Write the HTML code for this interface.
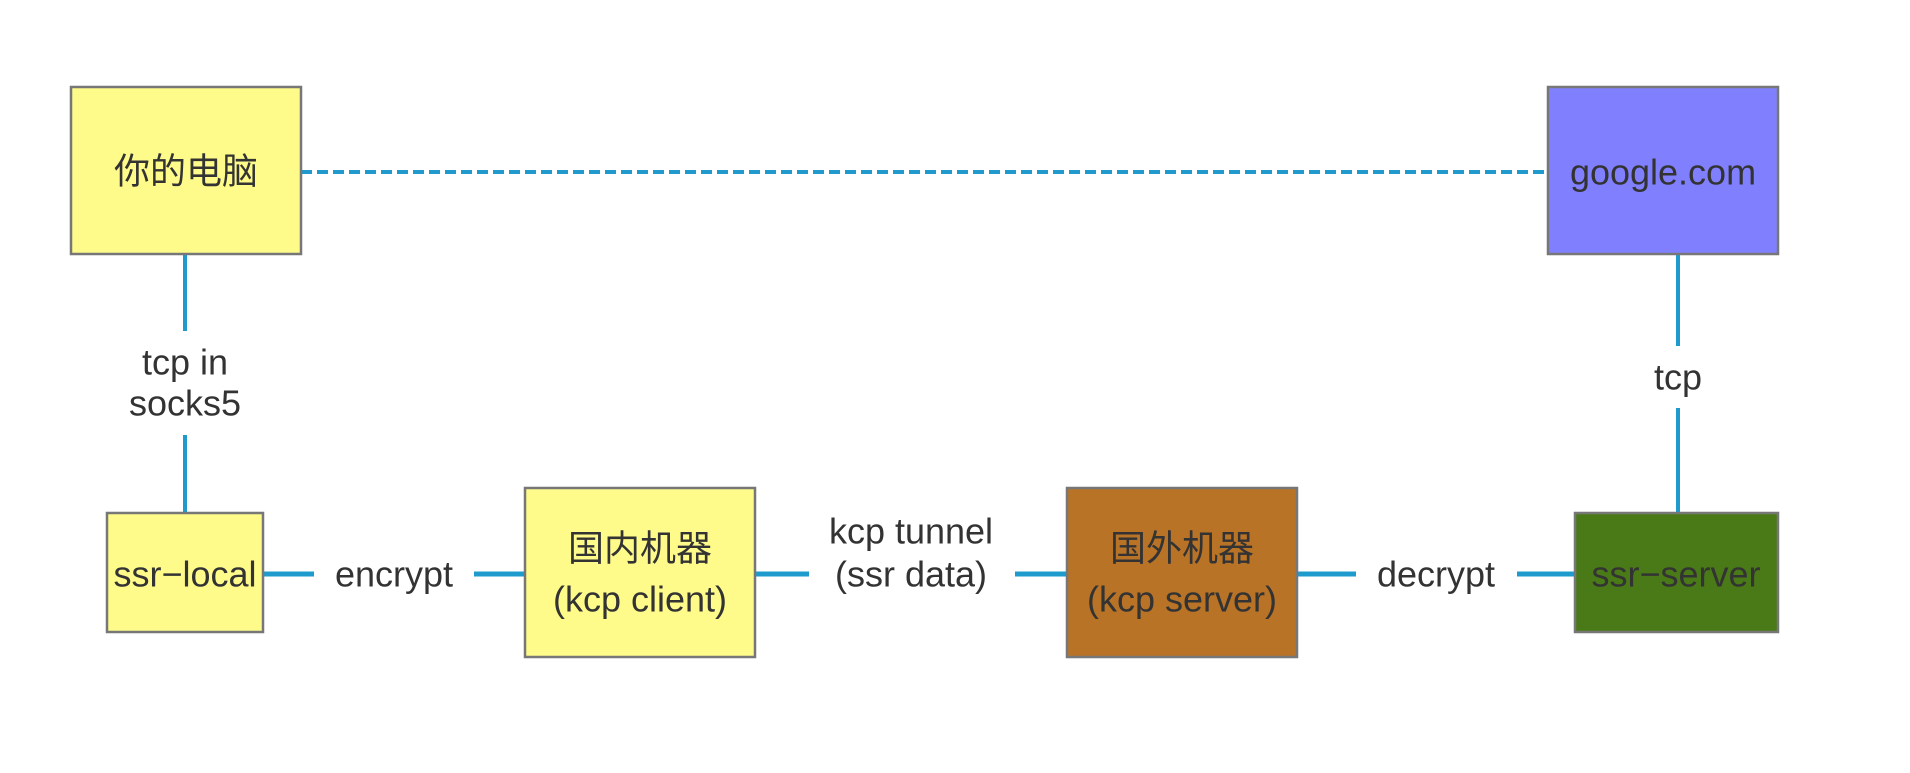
<!DOCTYPE html>
<html><head><meta charset="utf-8"><style>
html,body{margin:0;padding:0;background:#fff;}
svg text{font-family:"Liberation Sans","Noto Sans CJK SC",sans-serif;font-size:36px;fill:#333;text-anchor:middle;dominant-baseline:central;}
</style></head><body>
<svg width="1910" height="768" xmlns="http://www.w3.org/2000/svg">
<g stroke="#1e9bcc" stroke-width="4" fill="none">
<line x1="301" y1="172" x2="1548" y2="172" stroke-dasharray="11,5"/>
<line x1="185" y1="255" x2="185" y2="331"/>
<line x1="185" y1="435" x2="185" y2="513"/>
<path d="M1678 513 V408 M1678 346 V252 Q1678 245 1683 245"/>
<line x1="263" y1="574" x2="314" y2="574" stroke-width="5"/>
<line x1="474" y1="574" x2="525" y2="574" stroke-width="5"/>
<line x1="755" y1="574" x2="809" y2="574" stroke-width="5"/>
<line x1="1015" y1="574" x2="1067" y2="574" stroke-width="5"/>
<line x1="1297" y1="574" x2="1356" y2="574" stroke-width="5"/>
<line x1="1517" y1="574" x2="1575" y2="574" stroke-width="5"/>
</g>
<g stroke="#777" stroke-width="2.5">
<rect x="71" y="87" width="230" height="167" fill="#fffb8a"/>
<rect x="1548" y="87" width="230" height="167" fill="#8080ff"/>
<rect x="107" y="513" width="156" height="119" fill="#fffb8a"/>
<rect x="525" y="488" width="230" height="169" fill="#fffb8a"/>
<rect x="1067" y="488" width="230" height="169" fill="#b87327"/>
<rect x="1575" y="513" width="203" height="119" fill="#4a7a17"/>
</g>
<text x="186" y="171">你的电脑</text>
<text x="1663" y="172">google.com</text>
<text x="185" y="362">tcp in</text>
<text x="185" y="403">socks5</text>
<text x="1678" y="377">tcp</text>
<text x="185" y="574">ssr−local</text>
<text x="394" y="574">encrypt</text>
<text x="640" y="548">国内机器</text>
<text x="640" y="599">(kcp client)</text>
<text x="911" y="531">kcp tunnel</text>
<text x="911" y="574">(ssr data)</text>
<text x="1182" y="548">国外机器</text>
<text x="1182" y="599">(kcp server)</text>
<text x="1436" y="574">decrypt</text>
<text x="1676" y="574">ssr−server</text>
</svg>
</body></html>
